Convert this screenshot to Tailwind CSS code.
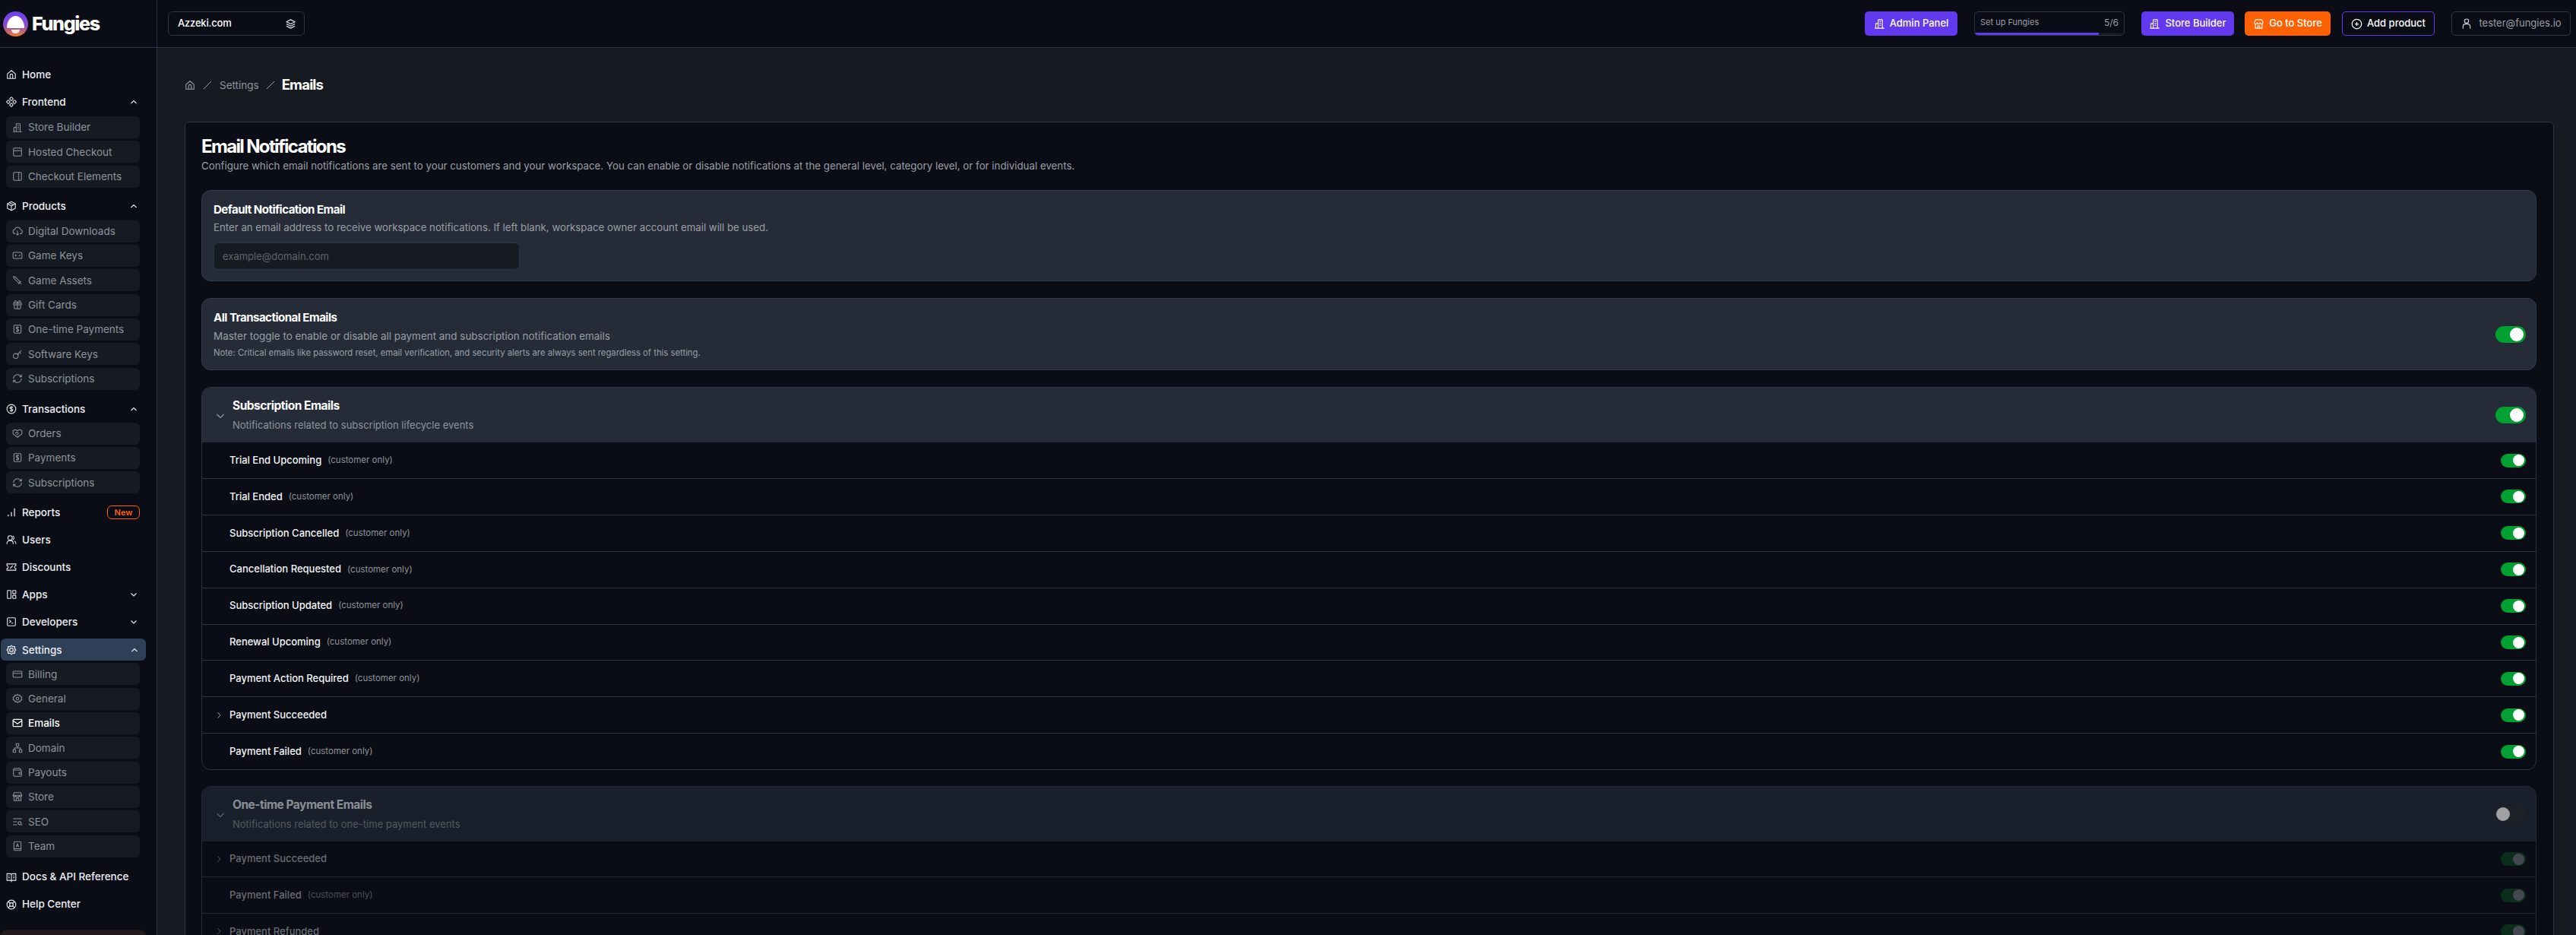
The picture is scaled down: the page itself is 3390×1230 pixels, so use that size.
<!DOCTYPE html>
<html lang="en">
<head>
  <meta charset="UTF-8">
  <title>Emails - Fungies</title>
  <script src="https://cdn.jsdelivr.net/npm/@tailwindcss/browser@4"></script>
</head>
<body class="bg-[#161a21] font-['Inter',sans-serif] text-white overflow-hidden">
<div class="flex flex-col w-[3390px] h-[1230px] overflow-hidden">

  <!-- Top bar -->
  <header class="flex items-center h-[63px] shrink-0 bg-[#0a0d15] border-b border-[#2a3548]">
    <div class="flex items-center w-[207px] h-full shrink-0 border-r border-[#2a3548] pl-[4px]">
      <svg width="33" height="33" viewBox="0 0 33 33">
        <defs><linearGradient id="lg" x1="0" y1="0" x2="0" y2="1"><stop offset="0" stop-color="#6a3df2"/><stop offset="0.55" stop-color="#8a4ccf"/><stop offset="1" stop-color="#f47a25"/></linearGradient></defs>
        <circle cx="16.5" cy="16.5" r="16.5" fill="url(#lg)"/>
        <path d="M5 21c0-8 5-15 11.5-15S28 13 28 21c0 1-1 1-2 1H7c-1 0-2 0-2-1z" fill="#fff"/>
        <path d="M11 24h11c0 3-2 5-5.500 5S11 27 11 24z" fill="#fde9e0"/>
      </svg>
      <span class="ml-[5px] text-[25px] leading-none font-extrabold tracking-[-1.3px]">Fungies</span>
    </div>
    <div class="flex items-center justify-between w-[180px] h-[32px] ml-[14px] pl-[12px] pr-[10px] border border-[#2a3548] rounded-[6px]">
      <span class="text-[13px] font-medium tracking-[-0.2px]">Azzeki.com</span>
      <svg class="w-[15px] h-[15px]" viewBox="0 0 24 24" fill="none" stroke="#e5e7eb" stroke-width="1.800" stroke-linejoin="round"><path d="M12 3l9 4.500-9 4.500-9-4.500z"/><path d="M3 12l9 4.500 9-4.500"/><path d="M3 16.500L12 21l9-4.500"/></svg>
    </div>
    <div class="flex items-center ml-auto pr-[7px] h-[32px] text-[13px] font-medium">
      <a class="flex items-center justify-center gap-[6px] w-[122px] h-full bg-[#6239ee] rounded-[5px]">
        <svg class="w-[15px] h-[17px]" viewBox="0 0 24 24" fill="none" stroke="#fff" stroke-width="1.800"><path d="M9 21V4a1 1 0 011-1h7a1 1 0 011 1v17"/><path d="M4 21v-9a1 1 0 011-1h4M2 21h20M12 7h3M12 11h3M12 15h3"/></svg>Admin Panel
      </a>
      <div class="flex flex-col w-[198px] h-full ml-[22px] border border-[#2a3548] rounded-[5px] overflow-hidden">
        <div class="flex flex-1 items-center justify-between px-[7px] text-[11px] font-normal text-[#9a9ea5]"><span>Set up Fungies</span><span class="text-[12px]">5/6</span></div>
        <div class="h-[3px] bg-[#161a21]"><div class="h-full bg-[#6239ee]" style="width:83.300%"></div></div>
      </div>
      <a class="flex items-center justify-center gap-[6px] w-[122px] h-full ml-[22px] bg-[#6239ee] rounded-[5px]">
        <svg class="w-[15px] h-[17px]" viewBox="0 0 24 24" fill="none" stroke="#fff" stroke-width="1.800"><path d="M9 21V4a1 1 0 011-1h7a1 1 0 011 1v17"/><path d="M4 21v-9a1 1 0 011-1h4M2 21h20M12 7h3M12 11h3M12 15h3"/></svg>Store Builder
      </a>
      <a class="flex items-center justify-center gap-[6px] w-[113px] h-full ml-[14px] bg-[#ff6000] rounded-[5px]">
        <svg class="w-[15px] h-[17px]" viewBox="0 0 24 24" fill="none" stroke="#fff" stroke-width="1.800" stroke-linejoin="round"><path d="M6 3h12l3 6a3 3 0 01-6 0 3 3 0 01-6 0 3 3 0 01-6 0z"/><path d="M5 12v9h14v-9M10 21v-5h4v5"/></svg>Go to Store
      </a>
      <a class="flex items-center justify-center gap-[6px] w-[122px] h-full ml-[15px] border border-[#6239ee] rounded-[5px]">
        <svg class="w-[15px] h-[15px]" viewBox="0 0 24 24" fill="none" stroke="#fff" stroke-width="2"><circle cx="12" cy="12" r="10"/><path d="M12 8v8M8 12h8"/></svg>Add product
      </a>
      <a class="flex items-center justify-center gap-[8px] w-[157px] h-full ml-[22px] border border-[#2a3548] rounded-[5px] font-normal text-[#9a9ea5]">
        <svg class="w-[16px] h-[18px]" viewBox="0 0 24 24" fill="none" stroke="#c9ccd1" stroke-width="1.800"><circle cx="12" cy="7" r="4"/><path d="M5 22v-4a5 5 0 015-5h4a5 5 0 015 5v4"/></svg>tester@fungies.io
      </a>
    </div>
  </header>

  <div class="flex flex-1 min-h-0">
    <!-- Sidebar -->
    <aside class="relative w-[207px] shrink-0 bg-[#0a0d15] border-r border-[#2a3548] pt-[17px] text-[13.500px] font-medium text-[#eef0f3]">
      <div class="flex items-center gap-[7px] h-[36px] pl-[8px] w-[192px]">
        <svg class="w-[14px] h-[14px]" viewBox="0 0 24 24" fill="none" stroke="#e5e7eb" stroke-width="1.900" stroke-linejoin="round"><path d="M3 10.500L12 3l9 7.500V21H3z"/><path d="M9 21v-7a3 3 0 016 0v7"/></svg>
        <span>Home</span>
      </div>

      <div class="flex items-center gap-[7px] h-[36px] pl-[8px] pr-[10px] w-[192px]">
        <svg class="w-[14px] h-[14px]" viewBox="0 0 24 24" fill="none" stroke="#e5e7eb" stroke-width="1.900"><rect x="9" y="2" width="6" height="6" rx="1.500" transform="rotate(45 12 5)"/><rect x="9" y="16" width="6" height="6" rx="1.500" transform="rotate(45 12 19)"/><rect x="2" y="9" width="6" height="6" rx="1.500" transform="rotate(45 5 12)"/><rect x="16" y="9" width="6" height="6" rx="1.500" transform="rotate(45 19 12)"/></svg>
        <span>Frontend</span>
        <svg class="w-[12px] h-[12px] ml-auto" viewBox="0 0 24 24" fill="none" stroke="#e5e7eb" stroke-width="2.400"><path d="M5 16l7-7 7 7"/></svg>
      </div>
      <div class="flex flex-col gap-[3.330px] mt-[1px] ml-[8px] w-[176px] text-[#8f949c] font-normal">
        <a class="flex items-center gap-[7px] h-[29px] pl-[8px] bg-[#161a22] rounded-[6px]">
          <svg class="w-[14px] h-[14px]" viewBox="0 0 24 24" fill="none" stroke="#8f949c" stroke-width="1.800"><path d="M9 21V4a1 1 0 011-1h7a1 1 0 011 1v17"/><path d="M4 21v-9a1 1 0 011-1h4M2 21h20M12 7h3M12 11h3M12 15h3"/></svg>Store Builder</a>
        <a class="flex items-center gap-[7px] h-[29px] pl-[8px] bg-[#161a22] rounded-[6px]">
          <svg class="w-[14px] h-[14px]" viewBox="0 0 24 24" fill="none" stroke="#8f949c" stroke-width="1.800"><rect x="3" y="3" width="18" height="18" rx="2"/><path d="M3 9h18"/></svg>Hosted Checkout</a>
        <a class="flex items-center gap-[7px] h-[29px] pl-[8px] bg-[#161a22] rounded-[6px]">
          <svg class="w-[14px] h-[14px]" viewBox="0 0 24 24" fill="none" stroke="#8f949c" stroke-width="1.800"><rect x="3" y="3" width="18" height="18" rx="2"/><path d="M15 3v18"/><path d="M9 8h.01M9 12h.01M9 16h.01" transform="translate(9 0)"/></svg>Checkout Elements</a>
      </div>

      <div class="flex items-center gap-[7px] h-[36px] mt-[6px] pl-[8px] pr-[10px] w-[192px]">
        <svg class="w-[14px] h-[14px]" viewBox="0 0 24 24" fill="none" stroke="#e5e7eb" stroke-width="1.900" stroke-linejoin="round"><path d="M12 2l9 5v10l-9 5-9-5V7z"/><path d="M3 7l9 5 9-5M12 12v10M7.500 4.500l9 5"/></svg>
        <span>Products</span>
        <svg class="w-[12px] h-[12px] ml-auto" viewBox="0 0 24 24" fill="none" stroke="#e5e7eb" stroke-width="2.400"><path d="M5 16l7-7 7 7"/></svg>
      </div>
      <div class="flex flex-col gap-[3.330px] mt-[1px] ml-[8px] w-[176px] text-[#8f949c] font-normal">
        <a class="flex items-center gap-[7px] h-[29px] pl-[8px] bg-[#161a22] rounded-[6px]">
          <svg class="w-[14px] h-[14px]" viewBox="0 0 24 24" fill="none" stroke="#8f949c" stroke-width="1.800"><path d="M7 18a5 5 0 01-1-9.900 6.500 6.500 0 0112.500 0A5 5 0 0117 18"/><path d="M12 11v10M9 18l3 3 3-3"/></svg>Digital Downloads</a>
        <a class="flex items-center gap-[7px] h-[29px] pl-[8px] bg-[#161a22] rounded-[6px]">
          <svg class="w-[14px] h-[14px]" viewBox="0 0 24 24" fill="none" stroke="#8f949c" stroke-width="1.800"><rect x="2" y="5" width="20" height="14" rx="2"/><path d="M6 12h4M8 10v4M15 14l3-4"/></svg>Game Keys</a>
        <a class="flex items-center gap-[7px] h-[29px] pl-[8px] bg-[#161a22] rounded-[6px]">
          <svg class="w-[14px] h-[14px]" viewBox="0 0 24 24" fill="none" stroke="#8f949c" stroke-width="1.800"><path d="M3 3l4 1 11 11-3 3L4 7zM14 20l6-6M18 18l3 3"/></svg>Game Assets</a>
        <a class="flex items-center gap-[7px] h-[29px] pl-[8px] bg-[#161a22] rounded-[6px]">
          <svg class="w-[14px] h-[14px]" viewBox="0 0 24 24" fill="none" stroke="#8f949c" stroke-width="1.800"><rect x="3" y="8" width="18" height="4" rx="1"/><path d="M12 8v13M19 12v7a2 2 0 01-2 2H7a2 2 0 01-2-2v-7M7.500 8a2.500 2.500 0 010-5C10 3 12 8 12 8s2-5 4.500-5a2.500 2.500 0 010 5"/></svg>Gift Cards</a>
        <a class="flex items-center gap-[7px] h-[29px] pl-[8px] bg-[#161a22] rounded-[6px]">
          <svg class="w-[14px] h-[14px]" viewBox="0 0 24 24" fill="none" stroke="#8f949c" stroke-width="1.800"><rect x="4" y="3" width="16" height="18" rx="2"/><path d="M15 8.500c-.5-1-1.500-1.500-3-1.500-2 0-3 1-3 2.500s1 2 3 2.500 3 1 3 2.500-1 2.500-3 2.500c-1.500 0-2.500-.5-3-1.500M12 5.500v13"/></svg>One-time Payments</a>
        <a class="flex items-center gap-[7px] h-[29px] pl-[8px] bg-[#161a22] rounded-[6px]">
          <svg class="w-[14px] h-[14px]" viewBox="0 0 24 24" fill="none" stroke="#8f949c" stroke-width="1.800"><circle cx="8" cy="16" r="5.500"/><path d="M12 12l9-9M17 7l3 3M14 10l2 2"/></svg>Software Keys</a>
        <a class="flex items-center gap-[7px] h-[29px] pl-[8px] bg-[#161a22] rounded-[6px]">
          <svg class="w-[14px] h-[14px]" viewBox="0 0 24 24" fill="none" stroke="#8f949c" stroke-width="1.800"><path d="M3 12a9 9 0 0115.500-6.200L21 8M21 3v5h-5M21 12a9 9 0 01-15.500 6.200L3 16M3 21v-5h5"/></svg>Subscriptions</a>
      </div>

      <div class="flex items-center gap-[7px] h-[36px] mt-[7px] pl-[8px] pr-[10px] w-[192px]">
        <svg class="w-[14px] h-[14px]" viewBox="0 0 24 24" fill="none" stroke="#e5e7eb" stroke-width="1.900"><circle cx="12" cy="12" r="10"/><path d="M15.500 9c-.5-1-1.700-1.500-3.500-1.500-2 0-3.500 1-3.500 2.300s1.500 1.900 3.500 2.200 3.500 1 3.500 2.300-1.500 2.200-3.500 2.200c-1.800 0-3-.5-3.500-1.500M12 5.500v13"/></svg>
        <span>Transactions</span>
        <svg class="w-[12px] h-[12px] ml-auto" viewBox="0 0 24 24" fill="none" stroke="#e5e7eb" stroke-width="2.400"><path d="M5 16l7-7 7 7"/></svg>
      </div>
      <div class="flex flex-col gap-[3.330px] ml-[8px] w-[176px] text-[#8f949c] font-normal">
        <a class="flex items-center gap-[7px] h-[29px] pl-[8px] bg-[#161a22] rounded-[6px]">
          <svg class="w-[14px] h-[14px]" viewBox="0 0 24 24" fill="none" stroke="#8f949c" stroke-width="1.800" stroke-linejoin="round"><path d="M2 6l5-2 5 2 5-2 5 2v7l-10 8L2 13z"/><path d="M7 12l4-3 4 4M10 16l3-3"/></svg>Orders</a>
        <a class="flex items-center gap-[7px] h-[29px] pl-[8px] bg-[#161a22] rounded-[6px]">
          <svg class="w-[14px] h-[14px]" viewBox="0 0 24 24" fill="none" stroke="#8f949c" stroke-width="1.800"><rect x="4" y="3" width="16" height="18" rx="2"/><path d="M15 8.500c-.5-1-1.500-1.500-3-1.500-2 0-3 1-3 2.500s1 2 3 2.500 3 1 3 2.500-1 2.500-3 2.500c-1.500 0-2.500-.5-3-1.500M12 5.500v13"/></svg>Payments</a>
        <a class="flex items-center gap-[7px] h-[29px] pl-[8px] bg-[#161a22] rounded-[6px]">
          <svg class="w-[14px] h-[14px]" viewBox="0 0 24 24" fill="none" stroke="#8f949c" stroke-width="1.800"><path d="M3 12a9 9 0 0115.500-6.200L21 8M21 3v5h-5M21 12a9 9 0 01-15.500 6.200L3 16M3 21v-5h5"/></svg>Subscriptions</a>
      </div>

      <div class="flex items-center gap-[7px] h-[36px] mt-[7px] pl-[8px] pr-[8px] w-[192px]">
        <svg class="w-[14px] h-[14px]" viewBox="0 0 24 24" fill="none" stroke="#e5e7eb" stroke-width="2.200"><path d="M5 21v-4M12 21V11M19 21V3"/></svg>
        <span>Reports</span>
        <span class="flex items-center justify-center w-[43px] h-[18px] ml-auto border border-[#ff5f00] rounded-[6px] text-[11px] font-semibold text-[#ff5f00]">New</span>
      </div>
      <div class="flex items-center gap-[7px] h-[36px] pl-[8px] w-[192px]">
        <svg class="w-[14px] h-[14px]" viewBox="0 0 24 24" fill="none" stroke="#e5e7eb" stroke-width="1.900"><circle cx="9" cy="8" r="5"/><path d="M2 22v-2a6 6 0 016-6h2a6 6 0 016 6v2M15 3.500a5 5 0 010 9M19 15a6 6 0 013 5v2"/></svg>
        <span>Users</span>
      </div>
      <div class="flex items-center gap-[7px] h-[36px] pl-[8px] w-[192px]">
        <svg class="w-[14px] h-[14px]" viewBox="0 0 24 24" fill="none" stroke="#e5e7eb" stroke-width="1.900"><path d="M2 5h20v4a3 3 0 000 6v4H2v-4a3 3 0 000-6z"/><path d="M9 15l6-6M9 9h.01M15 15h.01"/></svg>
        <span>Discounts</span>
      </div>
      <div class="flex items-center gap-[7px] h-[36px] pl-[8px] pr-[10px] w-[192px]">
        <svg class="w-[14px] h-[14px]" viewBox="0 0 24 24" fill="none" stroke="#e5e7eb" stroke-width="1.900"><rect x="3" y="3" width="8" height="18" rx="1"/><rect x="15" y="3" width="7" height="7" rx="1"/><rect x="15" y="14" width="7" height="7" rx="1"/></svg>
        <span>Apps</span>
        <svg class="w-[12px] h-[12px] ml-auto" viewBox="0 0 24 24" fill="none" stroke="#e5e7eb" stroke-width="2.400"><path d="M5 9l7 7 7-7"/></svg>
      </div>
      <div class="flex items-center gap-[7px] h-[36px] pl-[8px] pr-[10px] w-[192px]">
        <svg class="w-[14px] h-[14px]" viewBox="0 0 24 24" fill="none" stroke="#e5e7eb" stroke-width="1.900"><rect x="3" y="3" width="18" height="18" rx="2"/><path d="M7 8l4 3-4 3M12 15h4"/></svg>
        <span>Developers</span>
        <svg class="w-[12px] h-[12px] ml-auto" viewBox="0 0 24 24" fill="none" stroke="#e5e7eb" stroke-width="2.400"><path d="M5 9l7 7 7-7"/></svg>
      </div>

      <div class="flex items-center gap-[7px] h-[29px] mt-[4px] ml-[1px] w-[191px] pl-[7px] pr-[9px] bg-[#2e3f58] rounded-[6px]">
        <svg class="w-[14px] h-[14px]" viewBox="0 0 24 24" fill="none" stroke="#e5e7eb" stroke-width="2.200"><path d="M12 2l2.500 2.500H19.500V9.500L22 12l-2.500 2.500V19.500H14.500L12 22l-2.500-2.500H4.500V14.500L2 12l2.500-2.500V4.500H9.500z" stroke-linejoin="round"/><circle cx="12" cy="12" r="4"/></svg>
        <span>Settings</span>
        <svg class="w-[12px] h-[12px] ml-auto" viewBox="0 0 24 24" fill="none" stroke="#e5e7eb" stroke-width="2.400"><path d="M5 16l7-7 7 7"/></svg>
      </div>
      <div class="flex flex-col gap-[3.330px] mt-[3px] ml-[8px] w-[176px] text-[#8f949c] font-normal">
        <a class="flex items-center gap-[7px] h-[29px] pl-[8px] bg-[#161a22] rounded-[6px]">
          <svg class="w-[14px] h-[14px]" viewBox="0 0 24 24" fill="none" stroke="#8f949c" stroke-width="1.800"><rect x="2" y="5" width="20" height="14" rx="2"/><path d="M2 10h20"/></svg>Billing</a>
        <a class="flex items-center gap-[7px] h-[29px] pl-[8px] bg-[#161a22] rounded-[6px]">
          <svg class="w-[14px] h-[14px]" viewBox="0 0 24 24" fill="none" stroke="#8f949c" stroke-width="1.800"><circle cx="12" cy="12" r="3"/><path d="M12 2l2 3 3.500-1 1 3.500 3.500 1-1 3.500 1 3-3.500 1-1 3.500-3.500-1-2 3-2-3-3.500 1-1-3.500-3.500-1 1-3-1-3.500 3.500-1 1-3.500 3.500 1z" stroke-linejoin="round"/></svg>General</a>
        <a class="flex items-center gap-[7px] h-[29px] pl-[8px] bg-[#161a22] rounded-[6px] text-white font-medium">
          <svg class="w-[14px] h-[14px]" viewBox="0 0 24 24" fill="none" stroke="#fff" stroke-width="2.200"><rect x="2" y="4" width="20" height="16" rx="2"/><path d="M2 7l10 7 10-7"/></svg>Emails</a>
        <a class="flex items-center gap-[7px] h-[29px] pl-[8px] bg-[#161a22] rounded-[6px]">
          <svg class="w-[14px] h-[14px]" viewBox="0 0 24 24" fill="none" stroke="#8f949c" stroke-width="1.800"><rect x="9" y="2" width="6" height="6" rx="1"/><rect x="2" y="16" width="6" height="6" rx="1"/><rect x="16" y="16" width="6" height="6" rx="1"/><path d="M12 8v4M5 16v-4h14v4"/></svg>Domain</a>
        <a class="flex items-center gap-[7px] h-[29px] pl-[8px] bg-[#161a22] rounded-[6px]">
          <svg class="w-[14px] h-[14px]" viewBox="0 0 24 24" fill="none" stroke="#8f949c" stroke-width="1.800"><path d="M19 7V5a2 2 0 00-2-2H6a3 3 0 00-3 3v12a3 3 0 003 3h13a2 2 0 002-2V9a2 2 0 00-2-2H3"/><path d="M21 12h-4a2 2 0 000 4h4"/></svg>Payouts</a>
        <a class="flex items-center gap-[7px] h-[29px] pl-[8px] bg-[#161a22] rounded-[6px]">
          <svg class="w-[14px] h-[14px]" viewBox="0 0 24 24" fill="none" stroke="#8f949c" stroke-width="1.800" stroke-linejoin="round"><path d="M5 3h14l3 6H2zM2 9a3 3 0 006 0 3 3 0 008 0 3 3 0 006 0"/><path d="M4 12v9h16v-9M9 21v-5h6v5"/></svg>Store</a>
        <a class="flex items-center gap-[7px] h-[29px] pl-[8px] bg-[#161a22] rounded-[6px]">
          <svg class="w-[14px] h-[14px]" viewBox="0 0 24 24" fill="none" stroke="#8f949c" stroke-width="1.800"><path d="M2 5h20M2 12h9M2 19h9"/><circle cx="17" cy="15" r="3.500"/><path d="M20 18l2.500 2.500"/></svg>SEO</a>
        <a class="flex items-center gap-[7px] h-[29px] pl-[8px] bg-[#161a22] rounded-[6px]">
          <svg class="w-[14px] h-[14px]" viewBox="0 0 24 24" fill="none" stroke="#8f949c" stroke-width="1.800"><rect x="4" y="2" width="16" height="20" rx="2"/><path d="M4 18h16M9 14l3-7 3 7M10 12h4"/></svg>Team</a>
      </div>

      <div class="flex items-center gap-[7px] h-[36px] mt-[8px] pl-[8px] w-[192px]">
        <svg class="w-[14px] h-[14px]" viewBox="0 0 24 24" fill="none" stroke="#e5e7eb" stroke-width="1.900"><path d="M12 6v15M2 4h7a3 3 0 013 2 3 3 0 013-2h7v15h-7a3 3 0 00-3 2 3 3 0 00-3-2H2zM5 9h3M5 13h3M16 9h3M16 13h3"/></svg>
        <span>Docs &amp; API Reference</span>
      </div>
      <div class="flex items-center gap-[7px] h-[36px] pl-[8px] w-[192px]">
        <svg class="w-[14px] h-[14px]" viewBox="0 0 24 24" fill="none" stroke="#e5e7eb" stroke-width="2"><circle cx="12" cy="12" r="10"/><circle cx="12" cy="12" r="4"/><path d="M5 5l4 4M19 5l-4 4M5 19l4-4M19 19l-4-4"/></svg>
        <span>Help Center</span>
      </div>
      <div class="h-[40px] mt-[15px] ml-[1px] w-[191px] bg-[#231a1c] rounded-[8px]"></div>
    </aside>

    <!-- Main -->
    <main class="flex-1 min-w-0 pl-[36px] pr-[29px] pt-[35px]">
      <nav class="flex items-center h-[28px] text-[#8f949c]">
        <svg class="w-[14px] h-[14px]" viewBox="0 0 24 24" fill="none" stroke="#9a9ea5" stroke-width="1.900" stroke-linejoin="round"><path d="M3 10.500L12 3l9 7.500V21H3z"/><path d="M9 21v-7a3 3 0 016 0v7"/></svg>
        <svg class="w-[12px] h-[12px] ml-[10px]" viewBox="0 0 12 12" fill="none" stroke="#9a9ea5"><path d="M1 11L11 1"/></svg>
        <span class="ml-[10px] text-[13.500px]">Settings</span>
        <svg class="w-[12px] h-[12px] ml-[9px]" viewBox="0 0 12 12" fill="none" stroke="#9a9ea5"><path d="M1 11L11 1"/></svg>
        <span class="ml-[9px] text-[18.500px] font-bold text-white tracking-[-0.800px]">Emails</span>
      </nav>

      <section class="mt-[34px] h-[1200px] px-[21px] pt-[18px] bg-[#0a0d15] border border-[#2a3548] rounded-[6px]">
        <h1 class="text-[24px] leading-[28px] font-bold tracking-[-1.650px]">Email Notifications</h1>
        <p class="mt-[1px] text-[13.300px] leading-[20px] text-[#9a9ea5]">Configure which email notifications are sent to your customers and your workspace. You can enable or disable notifications at the general level, category level, or for individual events.</p>

        <div class="h-[120px] mt-[22px] mr-[1px] px-[15px] pt-[15px] bg-[#252c38] border border-[#2f3b4f] rounded-[12px]">
          <h2 class="text-[15px] leading-[20px] font-bold tracking-[-0.500px]">Default Notification Email</h2>
          <p class="mt-[3px] text-[13.240px] leading-[20px] text-[#9a9ea5]">Enter an email address to receive workspace notifications. If left blank, workspace owner account email will be used.</p>
          <input class="block w-[403px] h-[36px] mt-[10px] px-[11px] bg-[#161a21] border border-[#2a3548] rounded-[6px] text-[13px] outline-none placeholder:text-[#5f646c]" placeholder="example@domain.com">
        </div>

        <div class="flex items-center justify-between h-[95px] mt-[22px] mr-[1px] pl-[15px] pr-[13px] bg-[#252c38] border border-[#2f3b4f] rounded-[12px]">
          <div>
            <h2 class="mt-[1px] text-[15px] leading-[20px] font-bold tracking-[-0.500px]">All Transactional Emails</h2>
            <p class="mt-[4px] text-[13.440px] leading-[20px] text-[#9a9ea5]">Master toggle to enable or disable all payment and subscription notification emails</p>
            <p class="mt-[3px] text-[11.300px] leading-[18px] text-[#9a9ea5]">Note: Critical emails like password reset, email verification, and security alerts are always sent regardless of this setting.</p>
          </div>
          <span class="flex justify-end items-center w-[40px] h-[22px] pr-[3px] bg-[#00a032] rounded-full"><span class="w-[18px] h-[18px] bg-white rounded-full"></span></span>
        </div>

        <!-- Subscription emails -->
        <div class="mt-[22px] mr-[1px] border border-[#2a3548] rounded-[12px] overflow-hidden">
          <div class="flex items-center h-[72px] pl-[18px] pr-[13px] bg-[#252c38]">
            <svg class="w-[12px] h-[12px] mt-[2px]" viewBox="0 0 24 24" fill="none" stroke="#9a9ea5" stroke-width="2.200"><path d="M3 8l9 9 9-9"/></svg>
            <div class="ml-[10px]">
              <h3 class="text-[15.500px] leading-[20px] font-bold tracking-[-0.500px]">Subscription Emails</h3>
              <p class="mt-[5px] text-[13px] leading-[20px] text-[#8f949c]">Notifications related to subscription lifecycle events</p>
            </div>
            <span class="flex justify-end items-center w-[40px] h-[22px] ml-auto pr-[3px] bg-[#00a032] rounded-full"><span class="w-[18px] h-[18px] bg-white rounded-full"></span></span>
          </div>
          <div class="flex items-center h-[47px] pl-[36px] pr-[13px]"><span class="text-[13px] font-medium text-[#f4f5f7]">Trial End Upcoming</span><span class="ml-[8px] text-[11.500px] text-[#8f949c]">(customer only)</span><span class="flex justify-end items-center w-[33px] h-[18px] ml-auto pr-[2px] bg-[#00a032] rounded-full"><span class="w-[15px] h-[15px] bg-white rounded-full"></span></span></div>
          <div class="flex items-center h-[47.900px] pl-[36px] pr-[13px] border-t border-[#2a3548]"><span class="text-[13px] font-medium text-[#f4f5f7]">Trial Ended</span><span class="ml-[8px] text-[11.500px] text-[#8f949c]">(customer only)</span><span class="flex justify-end items-center w-[33px] h-[18px] ml-auto pr-[2px] bg-[#00a032] rounded-full"><span class="w-[15px] h-[15px] bg-white rounded-full"></span></span></div>
          <div class="flex items-center h-[47.900px] pl-[36px] pr-[13px] border-t border-[#2a3548]"><span class="text-[13px] font-medium text-[#f4f5f7]">Subscription Cancelled</span><span class="ml-[8px] text-[11.500px] text-[#8f949c]">(customer only)</span><span class="flex justify-end items-center w-[33px] h-[18px] ml-auto pr-[2px] bg-[#00a032] rounded-full"><span class="w-[15px] h-[15px] bg-white rounded-full"></span></span></div>
          <div class="flex items-center h-[47.900px] pl-[36px] pr-[13px] border-t border-[#2a3548]"><span class="text-[13px] font-medium text-[#f4f5f7]">Cancellation Requested</span><span class="ml-[8px] text-[11.500px] text-[#8f949c]">(customer only)</span><span class="flex justify-end items-center w-[33px] h-[18px] ml-auto pr-[2px] bg-[#00a032] rounded-full"><span class="w-[15px] h-[15px] bg-white rounded-full"></span></span></div>
          <div class="flex items-center h-[47.900px] pl-[36px] pr-[13px] border-t border-[#2a3548]"><span class="text-[13px] font-medium text-[#f4f5f7]">Subscription Updated</span><span class="ml-[8px] text-[11.500px] text-[#8f949c]">(customer only)</span><span class="flex justify-end items-center w-[33px] h-[18px] ml-auto pr-[2px] bg-[#00a032] rounded-full"><span class="w-[15px] h-[15px] bg-white rounded-full"></span></span></div>
          <div class="flex items-center h-[47.900px] pl-[36px] pr-[13px] border-t border-[#2a3548]"><span class="text-[13px] font-medium text-[#f4f5f7]">Renewal Upcoming</span><span class="ml-[8px] text-[11.500px] text-[#8f949c]">(customer only)</span><span class="flex justify-end items-center w-[33px] h-[18px] ml-auto pr-[2px] bg-[#00a032] rounded-full"><span class="w-[15px] h-[15px] bg-white rounded-full"></span></span></div>
          <div class="flex items-center h-[47.900px] pl-[36px] pr-[13px] border-t border-[#2a3548]"><span class="text-[13px] font-medium text-[#f4f5f7]">Payment Action Required</span><span class="ml-[8px] text-[11.500px] text-[#8f949c]">(customer only)</span><span class="flex justify-end items-center w-[33px] h-[18px] ml-auto pr-[2px] bg-[#00a032] rounded-full"><span class="w-[15px] h-[15px] bg-white rounded-full"></span></span></div>
          <div class="flex items-center h-[47.900px] pl-[17px] pr-[13px] border-t border-[#2a3548]"><svg class="w-[10px] h-[10px] mr-[9px]" viewBox="0 0 24 24" fill="none" stroke="#9a9ea5" stroke-width="2.400"><path d="M8 3l9 9-9 9"/></svg><span class="text-[13px] font-medium text-[#f4f5f7]">Payment Succeeded</span><span class="flex justify-end items-center w-[33px] h-[18px] ml-auto pr-[2px] bg-[#00a032] rounded-full"><span class="w-[15px] h-[15px] bg-white rounded-full"></span></span></div>
          <div class="flex items-center h-[47.900px] pl-[36px] pr-[13px] border-t border-[#2a3548]"><span class="text-[13px] font-medium text-[#f4f5f7]">Payment Failed</span><span class="ml-[8px] text-[11.500px] text-[#8f949c]">(customer only)</span><span class="flex justify-end items-center w-[33px] h-[18px] ml-auto pr-[2px] bg-[#00a032] rounded-full"><span class="w-[15px] h-[15px] bg-white rounded-full"></span></span></div>
        </div>

        <!-- One-time payment emails (disabled) -->
        <div class="h-[300px] mt-[21px] mr-[1px] border border-[#212a38] rounded-[12px] overflow-hidden">
          <div class="flex items-center h-[72px] pl-[18px] pr-[13px] bg-[#1a202b]">
            <svg class="w-[12px] h-[12px] mt-[2px]" viewBox="0 0 24 24" fill="none" stroke="#5f646c" stroke-width="2.200"><path d="M3 8l9 9 9-9"/></svg>
            <div class="ml-[10px]">
              <h3 class="text-[15.500px] leading-[20px] font-bold tracking-[-0.500px] text-[#8b8e94]">One-time Payment Emails</h3>
              <p class="mt-[5px] text-[13px] leading-[20px] text-[#55595f]">Notifications related to one-time payment events</p>
            </div>
            <span class="flex items-center w-[40px] h-[22px] ml-auto pl-[1px] bg-[#1e2228] rounded-full"><span class="w-[18px] h-[18px] bg-[#a0a0a5] rounded-full"></span></span>
          </div>
          <div class="flex items-center h-[46px] pl-[17px] pr-[13px]"><svg class="w-[10px] h-[10px] mr-[9px]" viewBox="0 0 24 24" fill="none" stroke="#55595f" stroke-width="2.400"><path d="M8 3l9 9-9 9"/></svg><span class="text-[13px] font-medium text-[#6b6e74]">Payment Succeeded</span><span class="flex justify-end items-center w-[33px] h-[18px] ml-auto pr-[2px] bg-[#0b2e1c] rounded-full"><span class="w-[15px] h-[15px] bg-[#44474f] rounded-full"></span></span></div>
          <div class="flex items-center h-[47.900px] pl-[36px] pr-[13px] border-t border-[#212a38]"><span class="text-[13px] font-medium text-[#6b6e74]">Payment Failed</span><span class="ml-[8px] text-[11.500px] text-[#4d5157]">(customer only)</span><span class="flex justify-end items-center w-[33px] h-[18px] ml-auto pr-[2px] bg-[#0b2e1c] rounded-full"><span class="w-[15px] h-[15px] bg-[#44474f] rounded-full"></span></span></div>
          <div class="flex items-center h-[47.900px] pl-[17px] pr-[13px] border-t border-[#212a38]"><svg class="w-[10px] h-[10px] mr-[9px]" viewBox="0 0 24 24" fill="none" stroke="#55595f" stroke-width="2.400"><path d="M8 3l9 9-9 9"/></svg><span class="text-[13px] font-medium text-[#6b6e74]">Payment Refunded</span><span class="flex justify-end items-center w-[33px] h-[18px] ml-auto pr-[2px] bg-[#0b2e1c] rounded-full"><span class="w-[15px] h-[15px] bg-[#44474f] rounded-full"></span></span></div>
        </div>
      </section>
    </main>
  </div>
</div>
</body>
</html>
